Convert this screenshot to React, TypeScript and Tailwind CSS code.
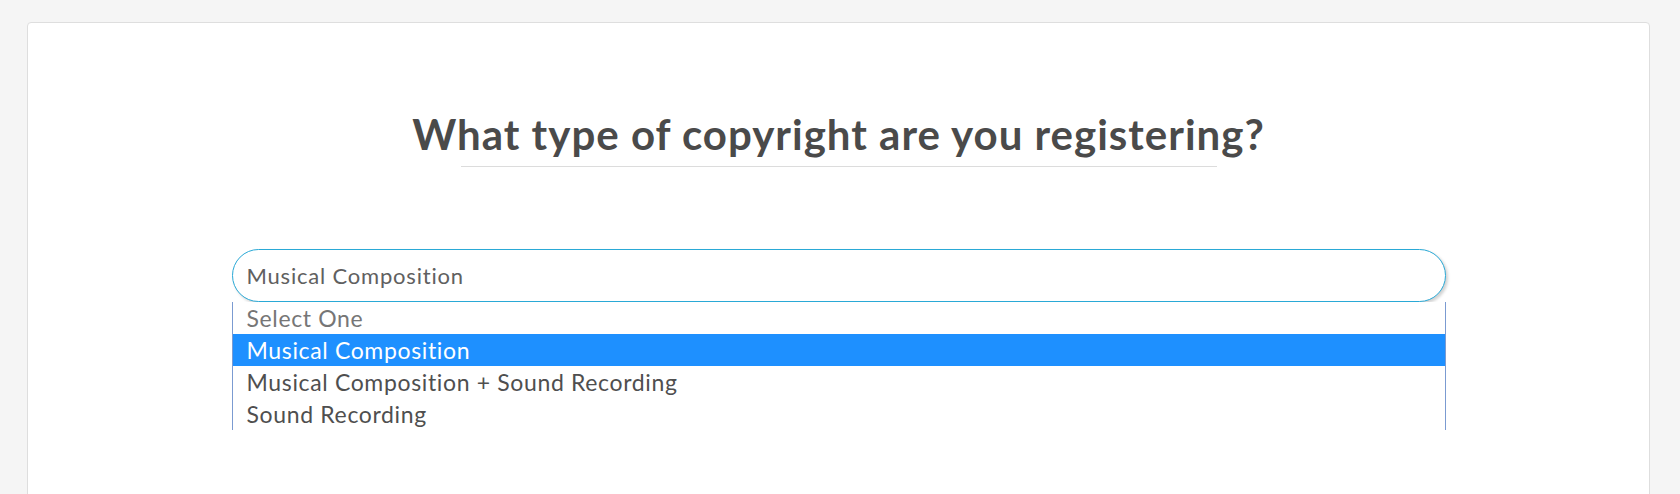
import React from "react";

const options = [
  "Select One",
  "Musical Composition",
  "Musical Composition + Sound Recording",
  "Sound Recording",
];

export default function App() {
  const selected = 1;
  return (
    <div className="h-[494px] overflow-hidden bg-[#f5f5f5] pt-[22px]">
      <div className="ml-[27px] h-[480px] w-[1623px] rounded-[4px] border border-[#dedede] bg-white">
        <div className="pt-[87px] text-center">
          <h1 className="font-['Lato',sans-serif] text-[42px] leading-[48px] font-bold tracking-[1px] text-[#4a4a4a]">
            What type of copyright are you registering?
          </h1>
          <div className="mx-auto mt-[8px] h-px w-[756px] bg-[#dcdcdc]" />
        </div>

        <div className="mx-auto mt-[82px] w-[1214px] font-['Lato',sans-serif]">
          <div className="flex h-[53px] items-center rounded-full border border-[#2aa9d6] bg-white pl-[14px] text-[22px] tracking-[0.8px] text-[#606060] shadow-[2px_2px_3px_rgba(0,0,0,0.18)]">
            Musical Composition
          </div>
          <ul className="border border-y-0 border-[#7b9bd1] bg-white">
            {options.map((o, i) => (
              <li
                key={o}
                className={
                  "h-[32px] pl-[14px] text-[23px] leading-[32px] tracking-[0.65px] " +
                  (i === selected
                    ? "bg-[#1e90ff] text-white"
                    : i === 0
                    ? "text-[#767676]"
                    : "text-[#4f4f4f]")
                }
              >
                {o}
              </li>
            ))}
          </ul>
        </div>
      </div>
    </div>
  );
}
